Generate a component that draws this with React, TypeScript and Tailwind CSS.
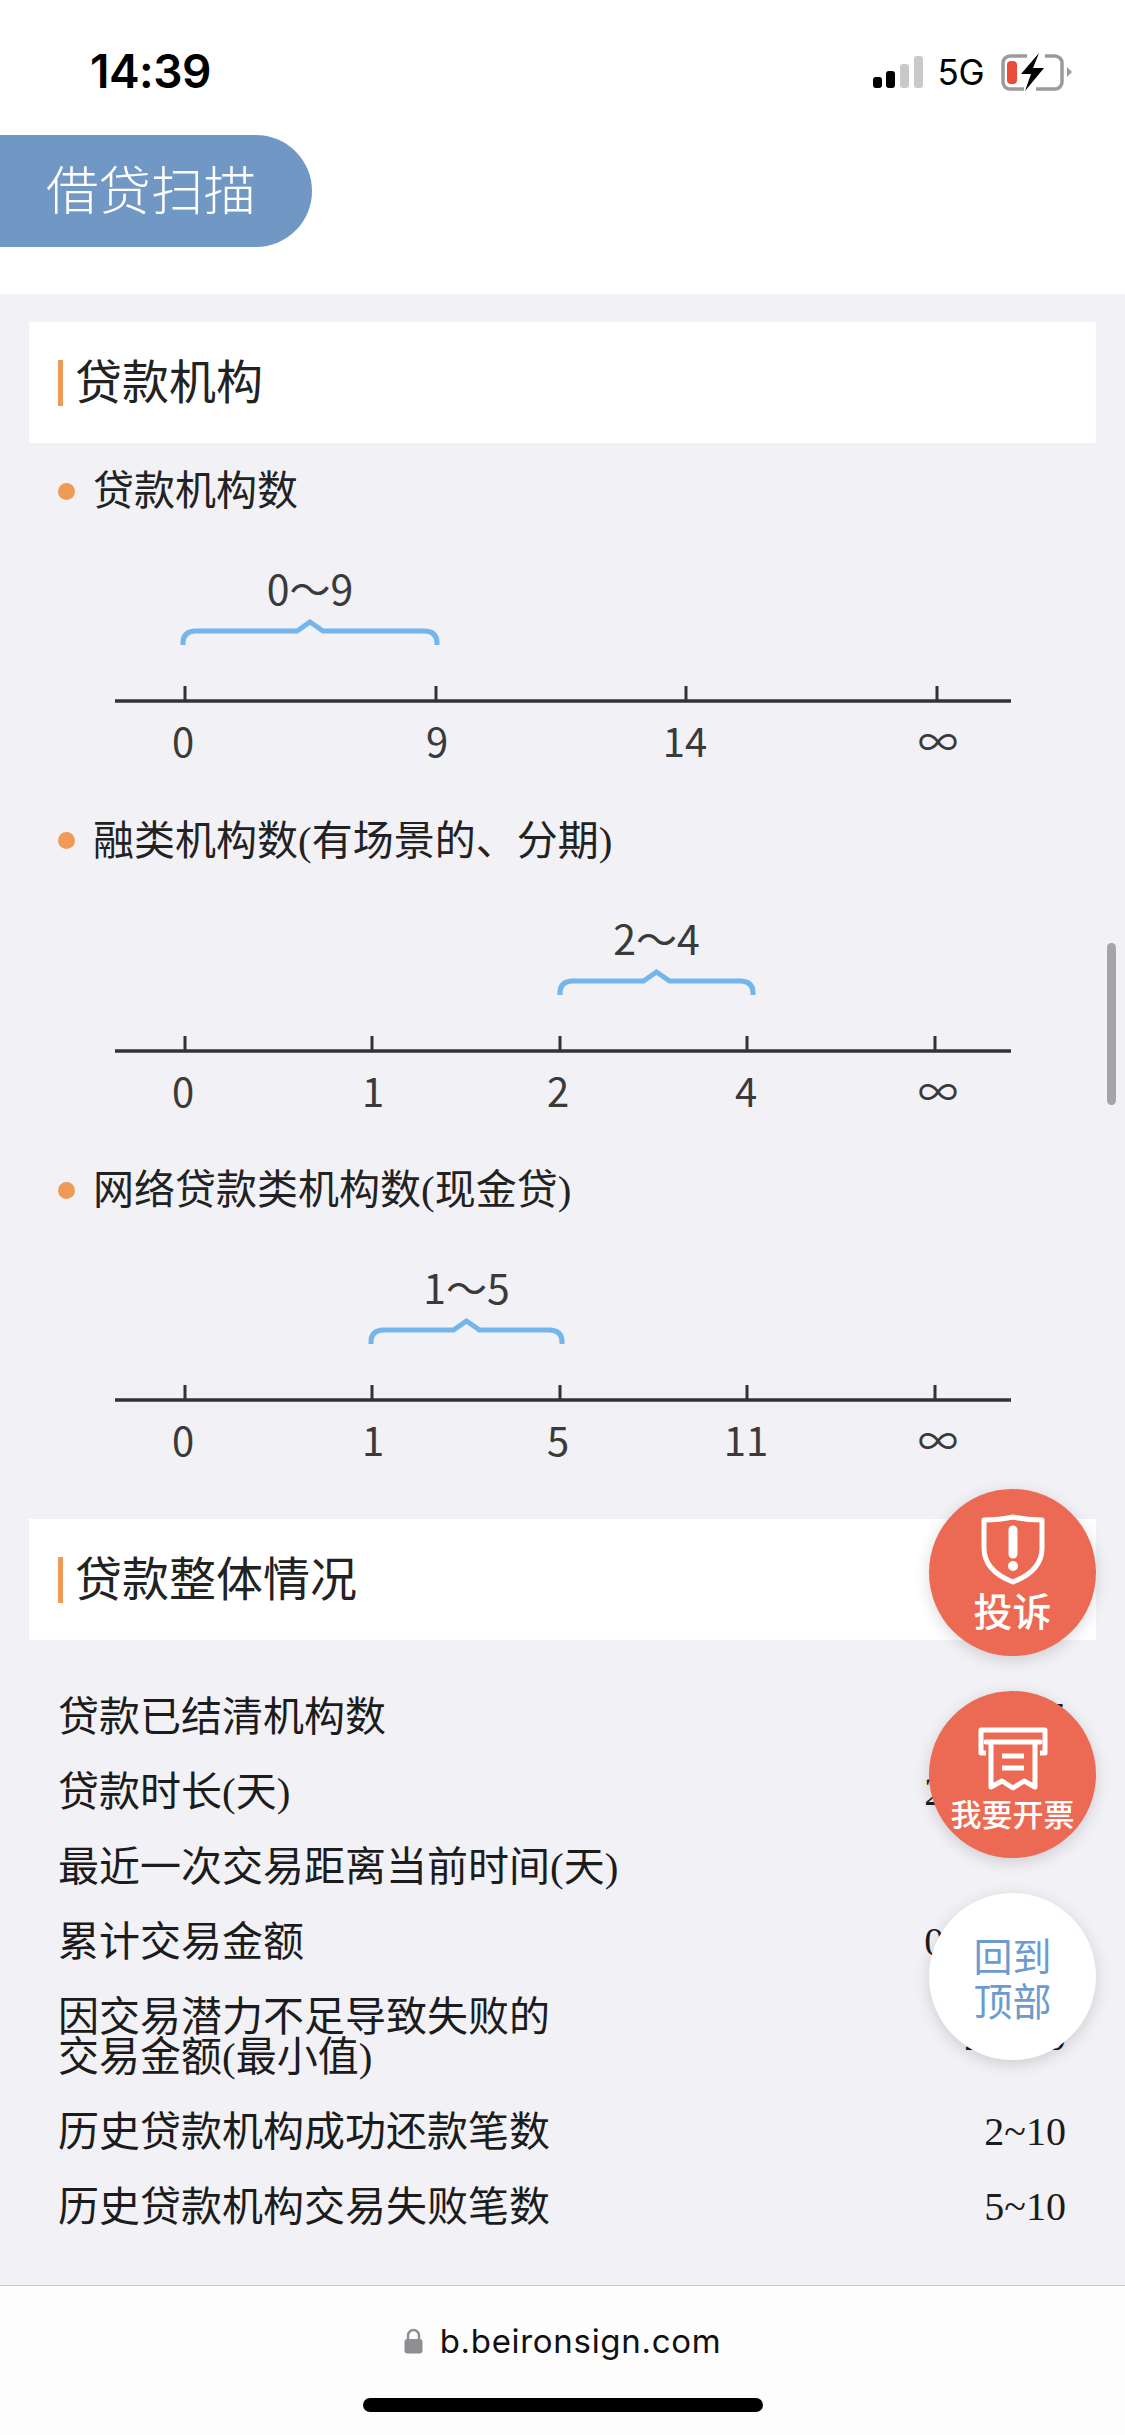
const serif = "font-['Liberation_Serif','Noto_Sans_CJK_SC',serif]";
const sans = "font-['Noto_Sans_CJK_SC','Noto_Sans',sans-serif]";

// every x below is measured from the axis' left end
interface ChartData {
  title: string;
  range: string;
  from: number;
  to: number;
  ticks: number[];
  labels: { text: string; x: number }[];
}

const charts: ChartData[] = [
  {
    title: "贷款机构数",
    range: "0～9",
    from: 68,
    to: 322,
    ticks: [70, 321, 571, 822],
    labels: [
      { text: "0", x: 68 },
      { text: "9", x: 322 },
      { text: "14", x: 570 },
      { text: "∞", x: 823 },
    ],
  },
  {
    title: "融类机构数(有场景的、分期)",
    range: "2～4",
    from: 445,
    to: 638,
    ticks: [70, 257, 445, 632, 820],
    labels: [
      { text: "0", x: 68 },
      { text: "1", x: 258 },
      { text: "2", x: 443 },
      { text: "4", x: 631 },
      { text: "∞", x: 823 },
    ],
  },
  {
    title: "网络贷款类机构数(现金贷)",
    range: "1～5",
    from: 256,
    to: 447,
    ticks: [70, 257, 445, 632, 820],
    labels: [
      { text: "0", x: 68 },
      { text: "1", x: 258 },
      { text: "5", x: 443 },
      { text: "11", x: 631 },
      { text: "∞", x: 823 },
    ],
  },
];

const rows = [
  { label: ["贷款已结清机构数"], value: "1~5" },
  { label: ["贷款时长(天)"], value: "270~360" },
  { label: ["最近一次交易距离当前时间(天)"], value: "" },
  { label: ["累计交易金额"], value: "0~10000" },
  { label: ["因交易潜力不足导致失败的", "交易金额(最小值)"], value: "2~500" },
  { label: ["历史贷款机构成功还款笔数"], value: "2~10" },
  { label: ["历史贷款机构交易失败笔数"], value: "5~10" },
];

function StatusBar() {
  return (
    <div className="flex h-[135px] shrink-0 items-start justify-between bg-white pl-[90px] pr-[52px] pt-[43px]">
      <span className="font-['Inter',sans-serif] text-[46px] leading-[56px] font-semibold tracking-[-0.5px] text-black">
        14:39
      </span>
      <div className="mt-[10px] flex items-center">
        <svg width="50" height="34" viewBox="0 0 50 34" className="mr-[15px]">
          <rect x="0" y="22" width="9" height="11" rx="3" fill="#000" />
          <rect x="13" y="16" width="9" height="17" rx="3" fill="#000" />
          <rect x="27" y="9" width="9" height="24" rx="3" fill="#c9c9c9" />
          <rect x="41" y="1" width="9" height="32" rx="3" fill="#c9c9c9" />
        </svg>
        <span className="mr-[17px] font-['Inter',sans-serif] text-[35px] leading-[38px] tracking-[-0.5px] text-black">5G</span>
        <svg width="72" height="38" viewBox="0 0 72 38">
          <path
            d="M26 3H9a7 7 0 0 0-7 7v19a7 7 0 0 0 7 7h14M44 3h10a7 7 0 0 1 7 7v19a7 7 0 0 1-7 7H35"
            fill="none"
            stroke="#9b9b9b"
            strokeWidth="3.5"
          />
          <path d="M66 14l5 5-5 5z" fill="#9b9b9b" />
          <rect x="6" y="8" width="10" height="23" rx="4" fill="#ea4c38" />
          <path d="M38 0L20 21h10l-6 17 19-23H32z" fill="#000" />
        </svg>
      </div>
    </div>
  );
}

function SectionHeader({ title }: { title: string }) {
  return (
    <div className="mx-[29px] flex h-[121px] items-center bg-white pl-[29px]">
      <span className="h-[46px] w-[5px] bg-[#ef9a56]" />
      <span className={`${sans} ml-[12px] -translate-y-[4px] text-[47px] leading-[60px] text-[#222]`}>{title}</span>
    </div>
  );
}

function Chart({ chart }: { chart: ChartData }) {
  const mid = (chart.from + chart.to) / 2;
  return (
    <section className="h-[349.5px]">
      <div className="flex h-[60px] items-center pl-[58px]">
        <span className="h-[17px] w-[17px] rounded-full bg-[#ef9a56]" />
        <span className={`${serif} ml-[18px] text-[41px] leading-[60px] text-[#222]`}>{chart.title}</span>
      </div>
      <div className="mx-[115px] mt-[41px] w-[896px]">
        <div
          className={`${sans} h-[53px] text-center text-[41px] leading-[50px] text-[#3a3a3a]`}
          style={{ marginLeft: chart.from, width: chart.to - chart.from }}
        >
          <span className="whitespace-nowrap">{chart.range}</span>
        </div>
        <svg width="896" height="90" viewBox="0 0 896 90" className="block">
          <path
            d={`M${chart.from} 30V28Q${chart.from} 16 ${chart.from + 13} 16H${mid - 13}L${mid} 7L${mid + 13} 16H${chart.to - 13}Q${chart.to} 16 ${chart.to} 28V30`}
            fill="none"
            stroke="#74b5ec"
            strokeWidth="5"
          />
          {chart.ticks.map((x) => (
            <line key={x} x1={x} x2={x} y1="71" y2="86" stroke="#333" strokeWidth="3" />
          ))}
          <line x1="0" x2="896" y1="86" y2="86" stroke="#333" strokeWidth="3.5" />
        </svg>
        <div className="relative mt-[7px] h-[56px]">
          {chart.labels.map((l) => (
            <span
              key={l.text}
              className={`${sans} absolute top-0 w-[80px] -translate-x-1/2 text-center text-[40px] leading-[56px] text-[#3a3a3a]`}
              style={{ left: l.x }}
            >
              {l.text}
            </span>
          ))}
        </div>
      </div>
    </section>
  );
}

function FloatButtons() {
  return (
    <div className="absolute left-[929px] top-[1489px] flex flex-col gap-[35px]">
      <button className="flex h-[167px] w-[167px] flex-col items-center rounded-full bg-[#ec6a53] pt-[25px] text-white shadow-[0_4px_16px_rgba(0,0,0,0.15)]">
        <svg width="64" height="72" viewBox="0 0 64 72">
          <path
            d="M3 6C14 6 23 5 32 3c9 2 18 3 29 3v28c0 16-11 27-29 34C14 61 3 50 3 34z"
            fill="none"
            stroke="#fff"
            strokeWidth="5"
            strokeLinejoin="round"
          />
          <line x1="32" y1="16" x2="32" y2="40" stroke="#fff" strokeWidth="9" strokeLinecap="round" />
          <circle cx="32" cy="52" r="5" fill="#fff" />
        </svg>
        <span className={`${sans} -mt-[2px] text-[39px] leading-[50px] font-medium`}>投诉</span>
      </button>
      <button className="flex h-[167px] w-[167px] flex-col items-center rounded-full bg-[#ec6a53] pt-[36px] text-white shadow-[0_4px_16px_rgba(0,0,0,0.15)]">
        <svg width="70" height="64" viewBox="0 0 70 64">
          <path d="M8 26H3V3h64v23h-5" fill="none" stroke="#fff" strokeWidth="5" strokeLinejoin="round" />
          <path d="M8 15h54" fill="none" stroke="#fff" strokeWidth="5" strokeLinecap="round" />
          <path
            d="M13 15v45l11-6 11 7 11-7 11 6V15"
            fill="none"
            stroke="#fff"
            strokeWidth="5"
            strokeLinejoin="round"
          />
          <path d="M24 29h22M24 41h22" stroke="#fff" strokeWidth="5" />
        </svg>
        <span className={`${sans} mt-[2px] text-[31px] leading-[40px] font-medium`}>我要开票</span>
      </button>
      <button
        className={`${sans} flex h-[167px] w-[167px] flex-col items-center justify-center rounded-full bg-white text-[39px] leading-[45px] text-[#6c9bcf] shadow-[0_4px_16px_rgba(0,0,0,0.15)]`}
      >
        <span>回到</span>
        <span>顶部</span>
      </button>
    </div>
  );
}

export default function App() {
  return (
    <div className="relative flex h-[2435px] w-[1125px] flex-col overflow-hidden bg-[#f1f1f6]">
      <StatusBar />

      <header className="h-[159px] shrink-0 bg-white">
        <div className="flex h-[112px] w-[312px] items-center rounded-r-[56px] bg-[#7198c4] pl-[46px]">
          <span className={`${sans} -translate-y-[4px] text-[52.5px] leading-[60px] font-light text-white`}>借贷扫描</span>
        </div>
      </header>

      <main className="min-h-0 flex-1 overflow-hidden pt-[28px]">
        <SectionHeader title="贷款机构" />
        <div className="pt-[18px]">
          {charts.map((c) => (
            <Chart key={c.title} chart={c} />
          ))}
        </div>

        <div className="mt-[9.5px]">
          <SectionHeader title="贷款整体情况" />
        </div>

        <div className={`${serif} pl-[58px] pr-[59px] pt-[39px] text-[40px] leading-[40px] text-[#1c1c1c]`}>
          {rows.map((r) => (
            <div key={r.label[0]} className="flex items-center justify-between py-[17.5px]">
              <div className="text-[41px]">
                {r.label.map((line) => (
                  <div key={line}>{line}</div>
                ))}
              </div>
              <span>{r.value}</span>
            </div>
          ))}
        </div>
      </main>

      <footer className="h-[150px] shrink-0 border-t border-[#c9c9cc] bg-[#fdfdfd]">
        <div className="mt-[35px] flex items-center justify-center">
          <svg width="19" height="26" viewBox="0 0 19 26" className="mr-[17px]">
            <path d="M4 12V7.5a5.5 5.5 0 0 1 11 0V12" fill="none" stroke="#8e8e93" strokeWidth="2.5" />
            <rect x="0.5" y="11" width="18" height="14.5" rx="3" fill="#8e8e93" />
          </svg>
          <span className="font-['Inter',sans-serif] text-[33px] leading-[40px] tracking-[0.7px] text-[#111]">
            b.beironsign.com
          </span>
        </div>
        <div className="mx-auto mt-[37px] h-[14px] w-[400px] rounded-full bg-black" />
      </footer>

      <div className="absolute left-[1107px] top-[943px] h-[162px] w-[9px] rounded-full bg-[#a5a5a8]" />
      <FloatButtons />
    </div>
  );
}
